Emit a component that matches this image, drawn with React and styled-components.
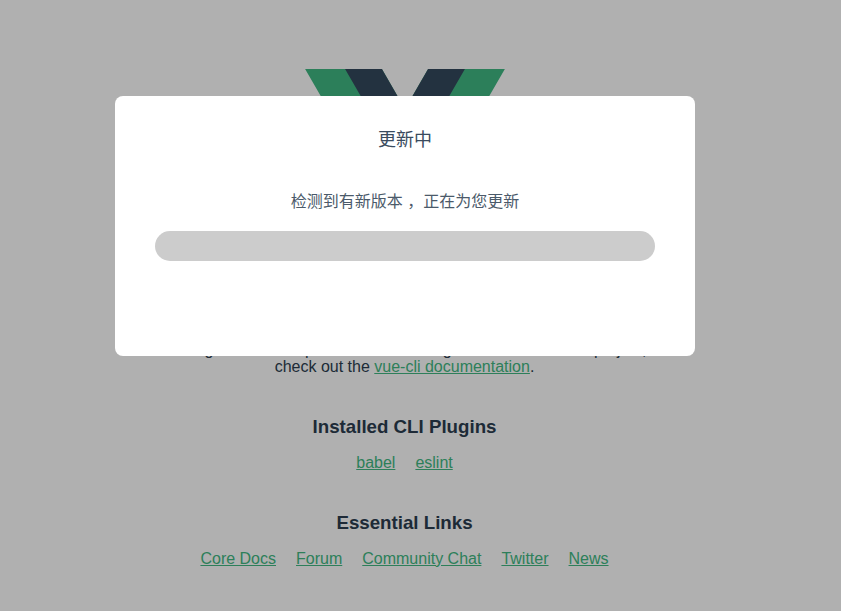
import React from "react";
import styled, { createGlobalStyle } from "styled-components";

const Global = createGlobalStyle`
  html, body { margin: 0; padding: 0; height: 100%; overflow: hidden; background: #fff; }
  body { padding: 8px; box-sizing: border-box; }
`;

const Page = styled.div`
  width: 793px;
  margin-top: 61px;
  font-family: "Liberation Sans", Arial, sans-serif;
  font-size: 16px;
  text-align: center;
  color: #2c3e50;
  -webkit-font-smoothing: antialiased;
`;

const Logo = styled.svg`
  display: block;
  width: 200px;
  height: 173px;
  margin: 0 0 42px 297px;
`;

const Title = styled.h1`
  font-size: 32px;
  line-height: 37px;
  margin: 21px 0;
`;

const Intro = styled.p`
  margin: 0;
  padding-bottom: 0.5px;
  line-height: 16.5px;
`;

const SectionTitle = styled.h3`
  font-size: 18.72px;
  line-height: 22px;
  font-weight: 700;
  margin: 40px 0 16px;
`;

const LinkList = styled.ul`
  list-style: none;
  margin: 0;
  padding: 0;
  line-height: 18px;
`;

const LinkItem = styled.li`
  display: inline-block;
  margin: 0 10px;
`;

const Link = styled.a`
  color: #42b983;
`;

const Overlay = styled.div`
  position: fixed;
  inset: 0;
  background: rgba(0, 0, 0, 0.31);
  display: flex;
  align-items: flex-start;
  padding: 96px 0 0 115px;
  font-family: "Liberation Sans", Arial, "Noto Sans CJK SC", sans-serif;
`;

const Modal = styled.div`
  width: 580px;
  height: 260px;
  box-sizing: border-box;
  padding: 31px 40px 0;
  background: #fff;
  border-radius: 8px;
  color: #3a4b5e;
  text-align: center;
`;

const ModalTitle = styled.div`
  font-size: 18px;
  line-height: 26px;
`;

const ModalText = styled.div`
  font-size: 16px;
  line-height: 22px;
  margin-top: 38px;
  color: #4b5a6a;
`;

const Track = styled.div`
  height: 30px;
  margin-top: 18px;
  border-radius: 15px;
  background: #ccc;
`;

const plugins = ["babel", "eslint"];
const essentials = ["Core Docs", "Forum", "Community Chat", "Twitter", "News"];

export default function App() {
  return (
    <>
      <Global />
      <Page>
        <Logo viewBox="0 0 261.76 226.69" aria-label="Vue logo">
          <path fill="#41b883" d="M161.096.001l-30.225 52.351L100.647.001H-.005l130.877 226.688L261.749.001z" />
          <path fill="#34495e" d="M161.096.001l-30.225 52.351L100.647.001H52.346l78.526 136.01L209.398.001z" />
        </Logo>
        <Title>Welcome to Your Vue.js App</Title>
        <Intro>
          For a guide and recipes on how to configure / customize this project,
          <br />
          check out the <Link href="#">vue-cli documentation</Link>.
        </Intro>
        <SectionTitle>Installed CLI Plugins</SectionTitle>
        <LinkList>
          {plugins.map((p) => (
            <LinkItem key={p}><Link href="#">{p}</Link></LinkItem>
          ))}
        </LinkList>
        <SectionTitle>Essential Links</SectionTitle>
        <LinkList>
          {essentials.map((p) => (
            <LinkItem key={p}><Link href="#">{p}</Link></LinkItem>
          ))}
        </LinkList>
      </Page>
      <Overlay>
        <Modal>
          <ModalTitle>更新中</ModalTitle>
          <ModalText>检测到有新版本 ，正在为您更新</ModalText>
          <Track />
        </Modal>
      </Overlay>
    </>
  );
}
